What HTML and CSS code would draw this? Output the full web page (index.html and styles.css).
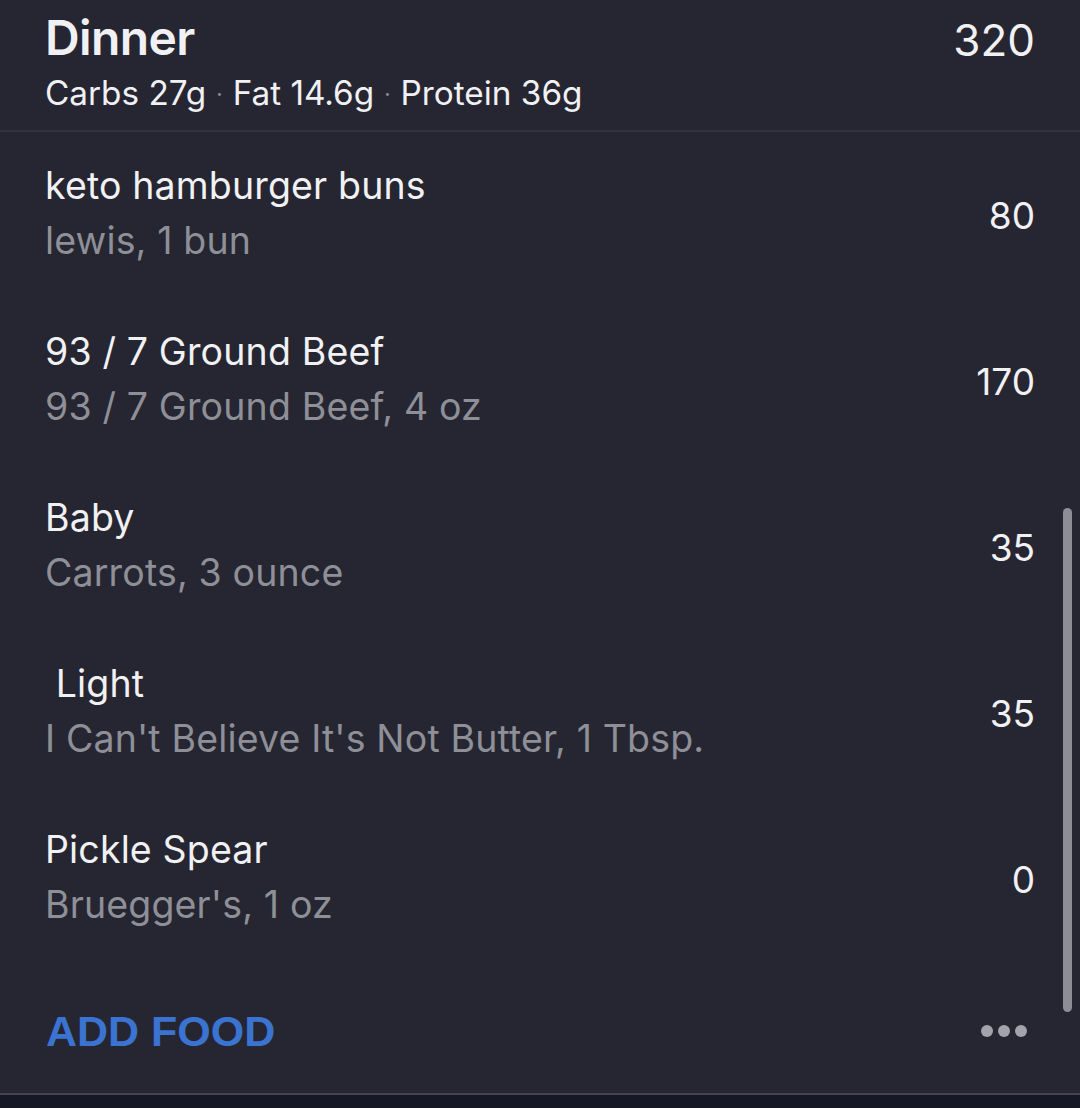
FILE: index.html
```html
<!DOCTYPE html>
<html>
<head>
<meta charset="utf-8">
<link rel="stylesheet" href="styles.css">
</head>
<body>
<div class="screen">
  <header class="meal-head">
    <div class="meal-info">
      <div class="meal-title">Dinner</div>
      <div class="meal-macros">Carbs 27g<span class="dot">·</span>Fat 14.6g<span class="dot">·</span>Protein 36g</div>
    </div>
    <div class="meal-total">320</div>
  </header>
  <ul class="food-list">
    <li class="food">
      <div class="food-text">
        <div class="food-name">keto hamburger buns</div>
        <div class="food-desc">lewis, 1 bun</div>
      </div>
      <div class="food-cal">80</div>
    </li>
    <li class="food">
      <div class="food-text">
        <div class="food-name">93 / 7 Ground Beef</div>
        <div class="food-desc">93 / 7 Ground Beef, 4 oz</div>
      </div>
      <div class="food-cal">170</div>
    </li>
    <li class="food">
      <div class="food-text">
        <div class="food-name">Baby</div>
        <div class="food-desc">Carrots, 3 ounce</div>
      </div>
      <div class="food-cal">35</div>
    </li>
    <li class="food">
      <div class="food-text">
        <div class="food-name"> Light</div>
        <div class="food-desc">I Can't Believe It's Not Butter, 1 Tbsp.</div>
      </div>
      <div class="food-cal">35</div>
    </li>
    <li class="food">
      <div class="food-text">
        <div class="food-name">Pickle Spear</div>
        <div class="food-desc">Bruegger's, 1 oz</div>
      </div>
      <div class="food-cal">0</div>
    </li>
  </ul>
  <footer class="meal-foot">
    <div class="add-food">ADD FOOD</div>
    <div class="more"><span></span><span></span><span></span></div>
  </footer>
  <div class="scrollbar"></div>
</div>
<div class="bottom-strip"></div>
</body>
</html>
```

FILE: styles.css
```css
html, body {
  margin: 0;
  padding: 0;
  background: #171826;
}
body {
  width: 1080px;
  height: 1108px;
  overflow: hidden;
  font-family: Inter, "Noto Sans", sans-serif;
  color: #f1f1f4;
}
.screen {
  position: relative;
  background: #252631;
  height: 1095px;
  border-bottom: 2px solid #44454f;
  box-sizing: border-box;
}
.meal-head {
  display: flex;
  justify-content: space-between;
  align-items: flex-start;
  padding: 8px 45px 0 45px;
  height: 132px;
  box-sizing: border-box;
  border-bottom: 2px solid #31323d;
}
.meal-title {
  font-size: 48px;
  font-weight: 600;
  line-height: 60px;
  letter-spacing: -0.6px;
}
.meal-macros {
  font-size: 33.3px;
  line-height: 40px;
  margin-top: 5px;
}
.meal-macros .dot {
  color: #8d8e96;
  font-size: 22px;
  margin: 0 10px;
  vertical-align: 3px;
}
.meal-total {
  font-size: 44px;
  line-height: 60px;
  margin-top: 2px;
}
.food-list {
  list-style: none;
  margin: 0;
  padding: 0;
  padding-top: 26px;
}
.food {
  display: flex;
  justify-content: space-between;
  align-items: center;
  height: 166px;
  padding: 0 45px 0 45px;
  box-sizing: border-box;
}
.food-text {
  display: flex;
  flex-direction: column;
  align-self: flex-start;
}
.food-name {
  font-size: 37.5px;
  line-height: 55px;
  letter-spacing: 0.15px;
  white-space: pre;
  color: #f1f1f4;
}
.food-desc {
  font-size: 37.5px;
  line-height: 55px;
  letter-spacing: 0.15px;
  color: #8e8f97;
}
.food-cal {
  font-size: 37px;
  line-height: 55px;
  align-self: flex-start;
  margin-top: 30px;
}
.meal-foot {
  display: flex;
  justify-content: space-between;
  align-items: center;
  padding: 13px 53px 0 46px;
}
.add-food {
  font-family: "Liberation Sans", Arial, sans-serif;
  font-weight: 700;
  font-size: 43px;
  line-height: 60px;
  color: #3b73d1;
}
.more {
  display: flex;
  gap: 5px;
  margin-top: -1px;
}
.more span {
  width: 12px;
  height: 12px;
  border-radius: 50%;
  background: #a3a3ab;
}
.scrollbar {
  position: absolute;
  left: 1063px;
  top: 508px;
  width: 9px;
  height: 504px;
  border-radius: 5px;
  background: #8c8d96;
}
.bottom-strip {
  height: 13px;
  background: #171826;
}
```
